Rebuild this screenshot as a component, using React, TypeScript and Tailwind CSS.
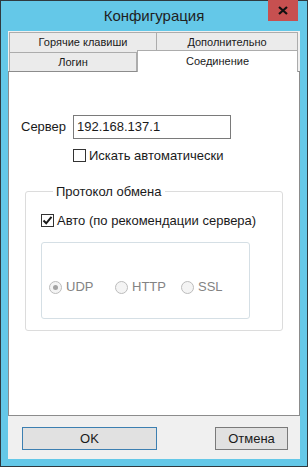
import React from 'react';

const font = { fontFamily: '"Liberation Sans", Arial, sans-serif' };

function CheckBox({ checked }: { checked?: boolean }) {
  return (
    <span className="flex h-[13px] w-[13px] shrink-0 items-center justify-center border border-[#333333] bg-white">
      {checked && (
        <svg width="11" height="11" viewBox="0 0 11 11">
          <path d="M1.5 5.5 L4.2 8.3 L9.5 1.8" fill="none" stroke="#1a1a1a" strokeWidth="2" />
        </svg>
      )}
    </span>
  );
}

function Radio({ label, checked }: { label: string; checked?: boolean }) {
  return (
    <div className="flex items-center gap-[4px] text-[#838383]">
      <span className="flex h-[13px] w-[13px] items-center justify-center rounded-full border border-[#BCBCBC] bg-[#F4F4F4]">
        {checked && <span className="h-[5px] w-[5px] rounded-full bg-[#A3A3A3]" />}
      </span>
      <span>{label}</span>
    </div>
  );
}

export default function App() {
  return (
    <div
      className="flex h-[467px] w-[308px] flex-col border border-[#2f3a40] bg-[#64C8E8] text-[13px] text-[#1a1a1a]"
      style={font}
    >
      <header className="relative flex h-[30px] shrink-0 items-center justify-center">
        <span className="text-[15px] text-[#1f1f1f]">Конфигурация</span>
        <button className="absolute right-[9px] top-[-1px] flex h-[21px] w-[30px] items-center justify-center bg-[#C75050]">
          <svg width="10" height="9" viewBox="0 0 10 9">
            <path d="M1 1 L9 8 M9 1 L1 8" stroke="#111" strokeWidth="2.2" />
          </svg>
        </button>
      </header>

      <div className="mx-[7px] mb-[7px] flex flex-1 flex-col bg-[#F0F0F0]">
        {/* tabs */}
        <div className="pt-[1px] text-[11px]">
          <div className="ml-[1px] flex">
            <div className="flex h-[20px] w-[148px] items-center justify-center border border-b-0 border-[#ACACAC] bg-[#EBEBEB]">
              Горячие клавиши
            </div>
            <div className="flex h-[20px] w-[141px] items-center justify-center border border-b-0 border-l-0 border-[#ACACAC] bg-[#EBEBEB]">
              Дополнительно
            </div>
          </div>
          <div className="ml-[1px] flex items-end">
            <div className="flex h-[19px] w-[128px] items-center justify-center border border-b-0 border-[#ACACAC] bg-[#EBEBEB]">
              Логин
            </div>
            <div className="relative z-10 -mb-px -mt-[2px] flex h-[22px] w-[161px] items-start justify-center border border-b-0 border-[#ACACAC] bg-white pt-[2px]">
              Соединение
            </div>
          </div>
        </div>

        <div className="flex h-[345px] flex-col border border-[#8C8C8C] bg-white">
          <div className="mt-[43px] flex items-center">
            <span className="ml-[12px] w-[52px]">Сервер</span>
            <div className="flex h-[24px] w-[158px] items-center border border-[#7A7A7A] px-[3px]">
              192.168.137.1
            </div>
          </div>
          <label className="ml-[64px] mt-[7px] flex items-center gap-[3px]">
            <CheckBox />
            <span>Искать автоматически</span>
          </label>

          <fieldset className="ml-[16px] mt-[16px] w-[258px] rounded-[3px] border border-[#DCDCDC] px-[15px] pb-[11px]">
            <legend className="ml-[12px] px-[3px]">Протокол обмена</legend>
            <label className="mt-[10px] flex items-center gap-[3px] whitespace-nowrap">
              <CheckBox checked />
              <span>Авто (по рекомендации сервера)</span>
            </label>
            <div className="mt-[11px] flex h-[77px] w-[209px] items-center rounded-[3px] border border-[#D5DFE5] pl-[7px] pt-[14px]">
              <div className="w-[66px]">
                <Radio label="UDP" checked />
              </div>
              <div className="w-[66px]">
                <Radio label="HTTP" />
              </div>
              <Radio label="SSL" />
            </div>
          </fieldset>
        </div>

        <div className="flex flex-1 items-start justify-between pl-[14px] pr-[12px] pt-[11px]">
          <button className="flex h-[23px] w-[135px] items-center justify-center border border-[#3C7FB1] bg-[#E1E1E1]">
            OK
          </button>
          <button className="flex h-[23px] w-[73px] items-center justify-center border border-[#7A7A7A] bg-[#E1E1E1]">
            Отмена
          </button>
        </div>
      </div>
    </div>
  );
}
